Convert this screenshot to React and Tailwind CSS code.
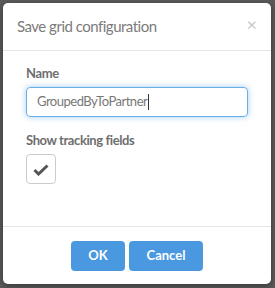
export default function App() {
  return (
    <div className="w-[275px] h-[288px] bg-[#5a5a5a] pl-[3px] pt-[3px] overflow-hidden" style={{ fontFamily: "Lato, 'Open Sans', sans-serif" }}>
      <div className="w-[268px] h-[281px] bg-white rounded-[5px] flex flex-col shadow-[0_2px_6px_rgba(0,0,0,0.4)]">
        <div className="h-[48px] flex items-center justify-between pl-[14px] pr-[14px] border-b border-[#e5e5e5]">
          <span className="text-[15px] tracking-[-0.5px] text-[#7b7b7b]">Save grid configuration</span>
          <span className="text-[18px] leading-none text-[#c8c8c8] -mt-[6px]">×</span>
        </div>
        <div className="flex-1 px-[23px] pt-[13px] flex flex-col">
          <div className="text-[13px] tracking-[-0.4px] font-bold text-[#6e6e6e] leading-[18px]">Name</div>
          <div className="mt-[5px] h-[30px] w-[222px] rounded-[4px] border border-[#66afe9] shadow-[0_0_6px_rgba(102,175,233,0.6)] flex items-center pl-[10px] text-[13px] tracking-[-0.5px] text-[#777]">
            GroupedByToPartner<span className="inline-block w-px h-[16px] bg-[#333] ml-px"></span>
          </div>
          <div className="mt-[14px] text-[13px] tracking-[-0.4px] font-bold text-[#6e6e6e] leading-[18px]">Show tracking fields</div>
          <div className="mt-[5px] w-[30px] h-[30px] rounded-[4px] border border-[#cccccc] flex items-center justify-center">
            <svg width="16" height="12" viewBox="0 0 16 12" className="mt-[2px] -ml-[1px]">
              <path d="M1.5 6 L5.5 10 L14.5 1.5" fill="none" stroke="#555" strokeWidth="3" />
            </svg>
          </div>
        </div>
        <div className="h-[58px] border-t border-[#e5e5e5] flex items-start justify-center pt-[14px] gap-[4px]">
          <button className="w-[54px] h-[30px] rounded-[4px] bg-[#4a98e0] text-white text-[13px] font-bold">OK</button>
          <button className="w-[74px] h-[30px] rounded-[4px] bg-[#4a98e0] text-white text-[13px] font-bold">Cancel</button>
        </div>
      </div>
    </div>
  );
}
